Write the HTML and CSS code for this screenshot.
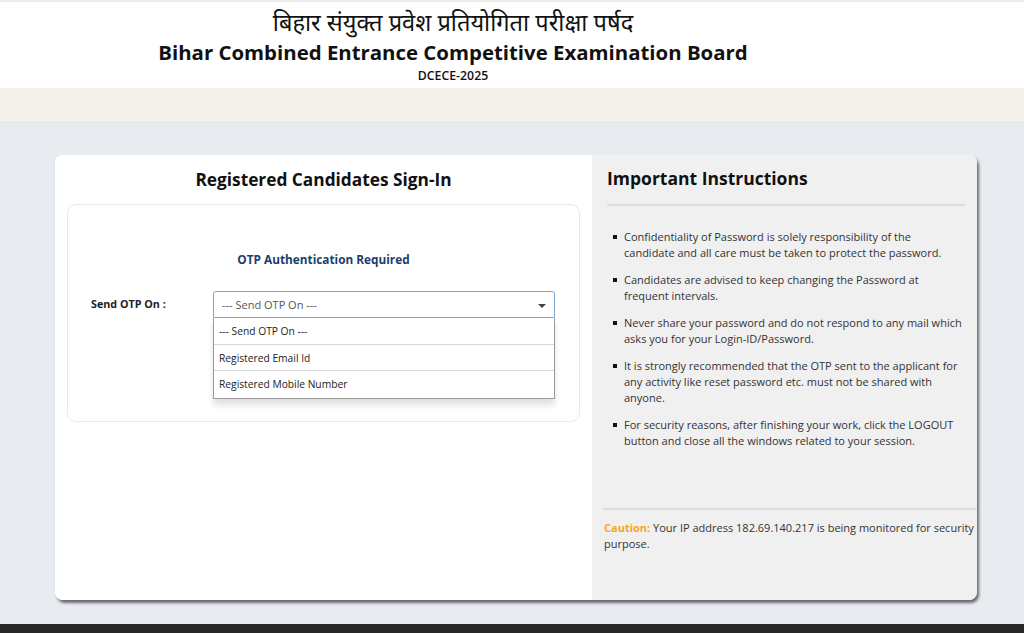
FILE: index.html
```html
<!DOCTYPE html>
<html lang="en">
<head>
<meta charset="utf-8">
<title>DCECE-2025</title>
<link rel="stylesheet" href="styles.css">
</head>
<body>
<header class="top">
  <div class="brand">
    <div class="hindi">बिहार संयुक्त प्रवेश प्रतियोगिता परीक्षा पर्षद</div>
    <div class="eng">Bihar Combined Entrance Competitive Examination Board</div>
    <div class="sub">DCECE-2025</div>
  </div>
</header>
<div class="band"></div>
<main class="main">
  <div class="card">
    <section class="left">
      <h2 class="left-title">Registered Candidates Sign-In</h2>
      <div class="inner">
        <div class="otp-title">OTP Authentication Required</div>
        <div class="row">
          <label class="lbl">Send OTP On :</label>
          <div class="selwrap">
            <div class="select">
              <span>--- Send OTP On ---</span>
              <span class="caret"></span>
            </div>
            <ul class="dropdown">
              <li>--- Send OTP On ---</li>
              <li>Registered Email Id</li>
              <li>Registered Mobile Number</li>
            </ul>
          </div>
        </div>
      </div>
    </section>
    <section class="right">
      <h2 class="right-title">Important Instructions</h2>
      <ul class="instr">
        <li>Confidentiality of Password is solely responsibility of the candidate and all care must be taken to protect the password.</li>
        <li>Candidates are advised to keep changing the Password at frequent intervals.</li>
        <li>Never share your password and do not respond to any mail which asks you for your Login-ID/Password.</li>
        <li>It is strongly recommended that the OTP sent to the applicant for any activity like reset password etc. must not be shared with anyone.</li>
        <li>For security reasons, after finishing your work, click the LOGOUT button and close all the windows related to your session.</li>
      </ul>
      <p class="caution"><span class="caution-label">Caution: </span>Your IP address 182.69.140.217 is being monitored for security purpose.</p>
    </section>
  </div>
</main>
<footer class="foot"></footer>
</body>
</html>
```

FILE: styles.css
```css
* { box-sizing: border-box; }
html, body { margin: 0; padding: 0; }
body {
  font-family: "Open Sans", "Noto Sans", sans-serif;
  background: #e8ebf0;
  color: #222;
  width: 1024px;
  height: 633px;
  overflow: hidden;
  display: flex;
  flex-direction: column;
}
.top {
  height: 88px;
  background: #fff;
  border-top: 2px solid #ececec;
  display: flex;
  justify-content: center;
  padding-right: 118px;
}
.brand {
  text-align: center;
  color: #111;
}
.hindi {
  font-family: "Noto Sans Devanagari", "Lohit Devanagari", "FreeSans", "Noto Sans", sans-serif;
  font-size: 23.6px;
  line-height: 30px;
  margin-top: 9px;
}
.eng {
  font-weight: 700;
  font-size: 20.4px;
  line-height: 22px;
}
.sub {
  font-weight: 600;
  font-size: 12.3px;
  line-height: 18px;
  margin-top: 4px;
}
.band {
  height: 35px;
  background: #f4f1ec;
  border-bottom: 1px solid #e2e2e2;
}
.main {
  flex: 1;
  padding: 32px 0 0 55px;
}
.card {
  width: 922px;
  height: 445px;
  display: flex;
  border-radius: 8px;
  background: #fff;
  box-shadow: 2px 3px 3px rgba(0,0,0,0.55);
}
.left {
  width: 537px;
  background: #fff;
  border-radius: 8px 0 0 8px;
  padding: 14px 12px 0 12px;
}
.left-title {
  margin: 0;
  text-align: center;
  font-size: 17.3px;
  font-weight: 700;
  line-height: 22px;
  color: #111;
}
.inner {
  margin-top: 13px;
  height: 218px;
  border: 1px solid #e8e8e8;
  border-radius: 9px;
  padding-top: 45px;
}
.otp-title {
  text-align: center;
  font-size: 11.8px;
  font-weight: 700;
  color: #1b3e6e;
  line-height: 18px;
}
.row {
  display: flex;
  margin-top: 23px;
}
.lbl {
  width: 145px;
  padding-left: 23px;
  font-size: 10.75px;
  font-weight: 700;
  color: #222;
  line-height: 26px;
}
.selwrap {
  position: relative;
  width: 342px;
}
.select {
  height: 27px;
  border: 1px solid #7aa7d4;
  border-radius: 3px 3px 0 0;
  display: flex;
  align-items: center;
  justify-content: space-between;
  padding: 0 8px 0 8px;
  font-size: 11px;
  color: #555;
  background: #fff;
}
.caret {
  width: 0;
  height: 0;
  border-left: 4px solid transparent;
  border-right: 4px solid transparent;
  border-top: 4px solid #444;
  margin-top: 2px;
}
.dropdown {
  position: absolute;
  left: 0;
  top: 27px;
  width: 342px;
  margin: 0;
  padding: 0;
  list-style: none;
  background: #fff;
  border: 1px solid #9a9a9a;
  border-top: none;
  box-shadow: 0 6px 6px rgba(0,0,0,0.12);
}
.dropdown li {
  height: 26.5px;
  line-height: 26px;
  padding-left: 5px;
  font-size: 10.25px;
  color: #222;
  border-bottom: 1px solid #d6d6d6;
}
.dropdown li:last-child { border-bottom: none; }
.right {
  width: 385px;
  background: #f0f0f0;
  border-radius: 0 8px 8px 0;
  padding: 11px 0 0 11px;
  display: flex;
  flex-direction: column;
}
.right-title {
  margin: 0 12px 0 4px;
  font-size: 17.5px;
  font-weight: 700;
  line-height: 24px;
  color: #111;
  padding-bottom: 14px;
  border-bottom: 2px solid #dedede;
}
.instr {
  list-style: none;
  margin: 23px 0 0 0;
  padding: 0 13px 0 21px;
  font-size: 11px;
  line-height: 16px;
  color: #333;
  height: 279px;
}
.instr li {
  position: relative;
  margin-bottom: 11px;
}
.instr li::before {
  content: "";
  position: absolute;
  left: -11px;
  top: 6px;
  width: 4px;
  height: 4px;
  background: #111;
}
.caution {
  margin: 0;
  border-top: 2px solid #dedede;
  padding: 10px 2px 0 1px;
  font-size: 11px;
  line-height: 16px;
  color: #333;
}
.caution-label {
  color: #f5a623;
  font-weight: 700;
}
.foot {
  height: 9px;
  background: #282828;
}
```
